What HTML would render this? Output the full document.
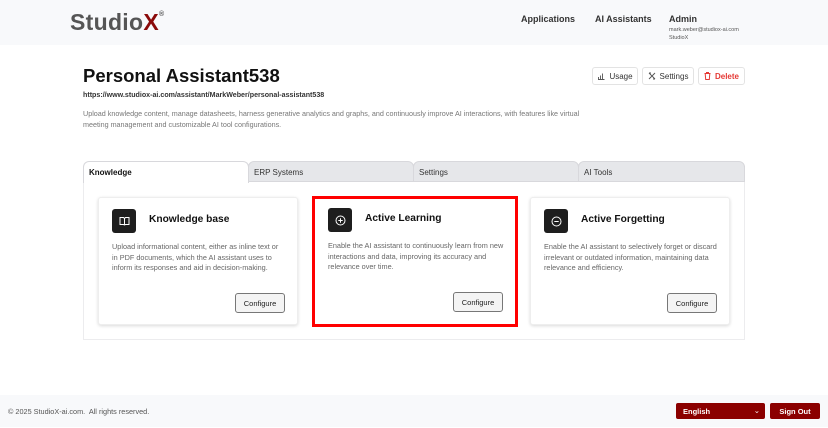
<!DOCTYPE html>
<html><head><meta charset="utf-8"><style>
*{box-sizing:border-box;margin:0;padding:0}
body{width:828px;height:428px;background:#fff;font-family:"Liberation Sans",sans-serif;position:relative;overflow:hidden;color:#111}
.a{position:absolute}
header{position:absolute;left:0;top:0;width:828px;height:45px;background:#f8f9fb}
.nav{font-size:9px;font-weight:bold;color:#333}
.btn{position:absolute;top:67px;height:18px;border:1px solid #e3e3e3;border-radius:3px;background:#fff;font-size:8px;color:#333;display:flex;align-items:center;justify-content:center;gap:4px}
.tab{position:absolute;top:161px;height:21px;background:#e6e7ea;border:1px solid #d8d8dc;border-radius:6px 6px 0 0;font-size:8px;color:#333;padding:6px 0 0 5px}
.card{position:absolute;top:197px;width:200px;height:128px;background:#fff;border:1px solid #eee;border-radius:3px;box-shadow:0 1px 3px rgba(0,0,0,.15)}
.ic{position:absolute;left:13px;top:11px;width:24px;height:24px;background:#1e1e1e;border-radius:3px;display:flex;align-items:center;justify-content:center}
.ct{position:absolute;left:50px;top:16px;font-size:10.2px;font-weight:bold;color:#111}
.cd{position:absolute;left:13px;top:44px;width:176px;font-size:7.3px;line-height:10.6px;color:#666}
.cf{position:absolute;right:12px;top:95px;width:50px;height:20px;border:1px solid #777;border-radius:3px;background:#f4f4f4;font-size:7.5px;color:#222;display:flex;align-items:center;justify-content:center}
footer{position:absolute;left:0;top:395px;width:828px;height:32px;background:#f8f9fb}
</style></head><body>
<header>
<div class="a" style="left:70px;top:9px;font-size:23px;font-weight:bold;color:#555;letter-spacing:0.3px">Studio<span style="color:#8b0a0a">X</span><span style="font-size:7px;vertical-align:top;position:relative;top:2px;color:#555">®</span></div>
<div class="a nav" style="left:521px;top:14px">Applications</div>
<div class="a nav" style="left:595px;top:14px">AI Assistants</div>
<div class="a nav" style="left:669px;top:14px">Admin</div>
<div class="a" style="left:669px;top:26px;font-size:5.5px;color:#555;line-height:8px">mark.weber@studiox-ai.com<br>StudioX</div>
</header>
<div class="a" style="left:83px;top:65px;font-size:18.5px;font-weight:bold">Personal Assistant538</div>
<div class="a" style="left:83px;top:91px;font-size:7.1px;font-weight:bold;color:#333">https://www.studiox-ai.com/assistant/MarkWeber/personal-assistant538</div>
<div class="a" style="left:83px;top:109px;font-size:7.2px;line-height:10.5px;color:#777;width:505px">Upload knowledge content, manage datasheets, harness generative analytics and graphs, and continuously improve AI interactions, with features like virtual meeting management and customizable AI tool configurations.</div>
<div class="btn" style="left:592px;width:46px"><svg width="8" height="8" viewBox="0 0 8 8" fill="none" stroke="#555" stroke-width="0.9"><path d="M1 7.5h6.5M1.5 7V5M3.5 7V3.5M5.5 7V1.5"/></svg>Usage</div>
<div class="btn" style="left:642px;width:52px"><svg width="8" height="8" viewBox="0 0 8 8" fill="none" stroke="#555" stroke-width="0.9"><path d="M1 1l6 6M7 1L1 7M1 1h2M5 7h2"/></svg>Settings</div>
<div class="btn" style="left:698px;width:47px;color:#e53935;font-weight:bold"><svg width="7" height="8" viewBox="0 0 7 8" fill="none" stroke="#e53935" stroke-width="1"><path d="M0.5 1.5h6M2.5 1.5V.5h2v1M1.2 1.5l.5 6h3.6l.5-6"/></svg>Delete</div>
<div class="a" style="left:83px;top:181px;width:662px;height:159px;border:1px solid #ececee;border-top:none"></div>
<div class="tab" style="left:248px;width:166px">ERP Systems</div>
<div class="tab" style="left:413px;width:166px">Settings</div>
<div class="tab" style="left:578px;width:167px">AI Tools</div>
<div class="tab" style="left:83px;width:166px;background:#fff;border-bottom:none;height:22px;font-weight:bold;color:#111">Knowledge</div>
<div class="card" style="left:98px">
<div class="ic"><svg width="11" height="10" viewBox="0 0 11 10" fill="none" stroke="#fff" stroke-width="1"><path d="M1 1.5h3.5l1 1 1-1H10v7H6.5l-1 .5-1-.5H1zM5.5 2.5v6.5"/></svg></div>
<div class="ct">Knowledge base</div>
<div class="cd" style="width:168px">Upload informational content, either as inline text or in PDF documents, which the AI assistant uses to inform its responses and aid in decision-making.</div>
<div class="cf">Configure</div></div>
<div class="a" style="left:312px;top:196px;width:206px;height:131px;border:3px solid #f00"></div>
<div class="card" style="left:315px;width:200px;border:none;box-shadow:none;top:199px;height:125px">
<div class="ic" style="top:9px"><svg width="11" height="11" viewBox="0 0 11 11" fill="none" stroke="#fff" stroke-width="1"><circle cx="5.5" cy="5.5" r="4.5"/><path d="M5.5 3.3v4.4M3.3 5.5h4.4"/></svg></div>
<div class="ct" style="top:14px">Active Learning</div>
<div class="cd" style="top:42px;width:182px">Enable the AI assistant to continuously learn from new interactions and data, improving its accuracy and relevance over time.</div>
<div class="cf" style="top:93px">Configure</div></div>
<div class="card" style="left:530px">
<div class="ic"><svg width="11" height="11" viewBox="0 0 11 11" fill="none" stroke="#fff" stroke-width="1"><circle cx="5.5" cy="5.5" r="4.5"/><path d="M3.3 5.5h4.4"/></svg></div>
<div class="ct">Active Forgetting</div>
<div class="cd" style="width:182px">Enable the AI assistant to selectively forget or discard irrelevant or outdated information, maintaining data relevance and efficiency.</div>
<div class="cf">Configure</div></div>
<footer>
<div class="a" style="left:8px;top:12px;font-size:7.3px;color:#555">© 2025 StudioX-ai.com.&nbsp; All rights reserved.</div>
<div class="a" style="left:676px;top:8px;width:89px;height:16px;background:#8b0000;border-radius:2px;color:#fff;font-size:7.5px;font-weight:bold;padding:4px 0 0 7px">English<span style="position:absolute;right:5px;top:3px;font-weight:normal">⌄</span></div>
<div class="a" style="left:770px;top:8px;width:50px;height:16px;background:#8b0000;border-radius:2px;color:#fff;font-size:7.5px;font-weight:bold;text-align:center;padding-top:4px">Sign Out</div>
</footer>
</body></html>
